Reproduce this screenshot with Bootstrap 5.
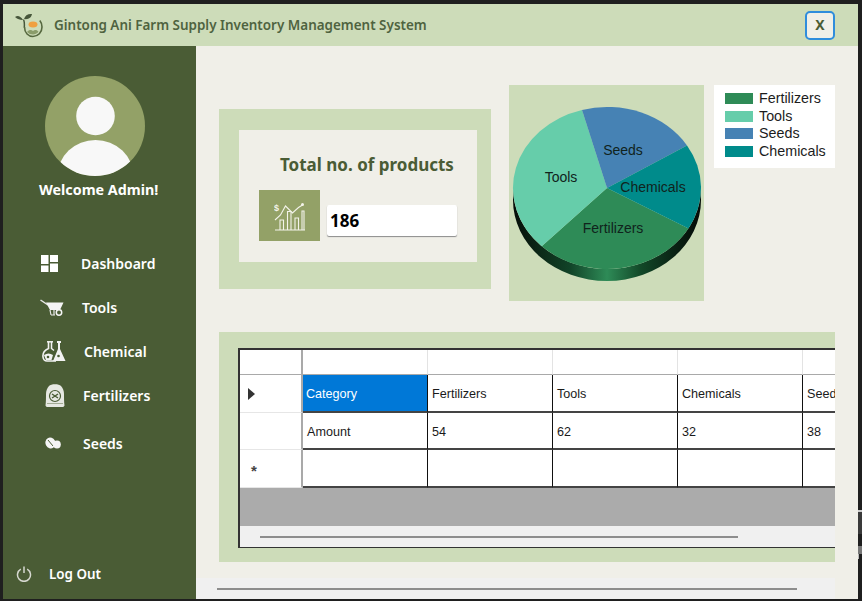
<!DOCTYPE html>
<html lang="en">
<head>
<meta charset="utf-8">
<title>Gintong Ani Farm Supply Inventory Management System</title>
<link href="https://cdn.jsdelivr.net/npm/bootstrap@5.3.0/dist/css/bootstrap.min.css" rel="stylesheet">
<style>
html,body{height:601px;overflow:hidden}
body{background:#1f1f1f;font-family:"Noto Sans","Open Sans",sans-serif}
.appwin{width:855px;height:595px;margin:4px 0 0 3px;background:#f0efe8}
.titlebar{height:42px;background:#cddcb9;padding:0 23px 0 12px}
.apptitle{font-size:13.45px;font-weight:600;color:#4f6340;margin-left:11px}
.closebtn{width:30px;height:29px;padding:0;background:#f0efe8;border:2px solid #2f8ddc;border-radius:5px;color:#4a5c35;font-weight:700;font-size:14px;line-height:1}
.closebtn:hover{background:#f0efe8;border-color:#2f8ddc;color:#4a5c35}
.bodyrow{height:553px}
.sidebar{width:193px;background:#4a5c35;color:#fff;flex:none}
.avatarwrap{padding-top:30px;padding-left:42px}
.welcome{font-size:14.3px;font-weight:700;margin:4px 0 0 36px;line-height:20px}
.menu{margin-top:41px}
.menuitem{height:44px;font-size:14px;font-weight:600;color:#fff;text-decoration:none}
.menuitem:hover{color:#fff}
.iconcell{width:78px;padding-left:38px;flex:none}
.cell-tools{width:79px;padding-left:37px}
.cell-chem{width:81px;padding-left:39px}
.cell-fert{width:80px;padding-left:42px}
.cell-seed{width:80px;padding-left:42px}
.item-seeds{height:48px;padding-top:4px}
.logoutrow{height:50px;font-size:13.4px;font-weight:600;padding-left:13px}
.logoutrow span{margin-left:17px}
.contentcol{width:639px;background:#f0efe8;overflow:hidden;flex:none}
.toparea{padding:39px 0 0 23px}
.totalpanel{width:272px;height:180px;margin-top:24px;background:#cddcb9;padding:21px 14px 27px 20px;flex:none}
.totalinner{height:132px;background:#f0efe8;padding:24px 20px 0}
.totallabel{font-size:17px;font-weight:700;color:#4a5c35;margin:0 0 14px 21px;line-height:22px;white-space:nowrap}
.iconbox{width:61px;height:51px;background:#93a167}
.countinput{width:130px;height:31px;margin:15px 0 0 7px;padding:0 3px;border:0;border-radius:2px;box-shadow:0 1px 1px #8b8b8b;font-size:17px;font-weight:700;color:#000;background:#fff}
.countinput:focus{box-shadow:0 1px 1px #8b8b8b;background:#fff}
.piepanel{width:195px;height:216px;margin-left:18px;background:#cddcb9}
.piepanel text{font-family:"Liberation Sans",sans-serif;font-size:14px;fill:#10231c}
.legendbox{width:121px;height:83px;margin-left:10px;background:#fff;padding:5px 0 0 11px;font-family:"Liberation Sans",sans-serif;font-size:14.3px;color:#1c1c1c}
.legendrow{height:17.5px;line-height:17.5px}
.swatch{width:28px;height:11px;margin-right:6px}
.sw-fert{background:#2e8b57}
.sw-tools{background:#66cdaa}
.sw-seeds{background:#4682b4}
.sw-chem{background:#008b8b}
.gridpanel{height:230px;margin:31px 0 0 23px;background:#cddcb9;padding:16px 0 14px 19px}
.gridframe{height:200px;border:2px solid #333;border-right:0;border-bottom-width:1px;background:#ababab}
.gridclip{overflow:hidden}
.datagrid{border-collapse:separate;border-spacing:0;table-layout:fixed;width:688px;font-family:"Liberation Sans",sans-serif;font-size:12.6px;color:#1a1a1a;background:#fff}
.colhead{width:63px}
.coldata{width:125px}
.datagrid td{padding:3px 3px 0 4px;vertical-align:middle;border-right:1px solid #111;border-bottom:2px solid #444;white-space:nowrap;overflow:hidden}
.datagrid tr.headrow td{height:25px;border-right:1px solid #e3e3e3;border-bottom:1px solid #a9a9a9}
.datagrid td.rowhead,.datagrid tr.headrow td.rowhead{border-right:2px solid #a9a9a9;border-bottom:1px solid #e6e6e6;padding:0}
.datagrid tr.headrow td.rowhead{border-bottom:1px solid #a9a9a9}
.datagrid td.selcell{background:#0078d7;color:#fff;padding-left:3px}
.datagrid tr.rowa td{height:38px}
.datagrid tr.rowc td{height:37px}
.datagrid tr.rowb td{height:38px}
.arrowmark{width:0;height:0;margin-left:8px;border-left:7px solid #333;border-top:6px solid transparent;border-bottom:6px solid transparent}
.starmark{font-size:15px;font-weight:700;line-height:14px;margin:5px 0 0 11px;color:#444;display:block}
.hscroll{height:21px;background:#f0f0f0;flex:none}
.thumbbar{height:2px;background:#8d8d8d}
.thumb-inner{width:478px;margin:0 0 0 20px}
.hscroll.outer{margin-top:16px}
.thumb-outer{width:580px;margin-left:21px}
.edgestrip{width:4px;padding-top:508px}
.edge-a{height:24px;background:#3a3a3a;border-top:2px solid #ccc;margin-top:2px}
.edge-b{height:8px;background:#777;margin-top:12px}
.edge-c{width:1px;height:5px;background:#bbb}
</style>
</head>
<body>
<div class="d-flex">
<div class="appwin">
  <header class="titlebar d-flex align-items-center">
    <svg width="28" height="26" viewBox="0 0 28 26" aria-hidden="true">
      <path d="M8 8C5 3.500 2.500 3.500 0 5c3 2.500 5.500 3.200 8 3z" fill="#46563a"/>
      <path d="M9 7c1-3.500 4-5.500 8-5-.5 3.500-3.500 5.800-8 5z" fill="#46563a"/>
      <path d="M8.500 7.500c1 2 1 5 .8 8" fill="none" stroke="#46563a" stroke-width="1.500"/>
      <path d="M9.500 15c0 6 4 9.500 8.500 9.500 5 0 9-4 9-9.500 0-2.500-.8-4.800-2.200-6.500" fill="none" stroke="#56683f" stroke-width="1.600"/>
      <ellipse cx="18" cy="12.500" rx="4.500" ry="3" fill="#f0a040"/>
      <path d="M12 20c2-2.500 4.500-2.500 6-1 1.500-1.500 4-1.500 5.500.8-1.500 2-3.500 2.700-5.500 2.700s-4.500-.8-6-2.500z" fill="#8a9c6a"/>
    </svg>
    <span class="apptitle">Gintong Ani Farm Supply Inventory Management System</span>
    <button type="button" class="btn closebtn ms-auto">X</button>
  </header>
  <div class="bodyrow d-flex">
    <aside class="sidebar d-flex flex-column">
      <div class="avatarwrap">
        <svg width="100" height="100" viewBox="0 0 100 100" aria-hidden="true">
          <defs><clipPath id="avclip"><circle cx="50" cy="50" r="50"/></clipPath></defs>
          <circle cx="50" cy="50" r="50" fill="#93a167"/>
          <circle cx="50.500" cy="40" r="19.300" fill="#f8f8f8"/>
          <ellipse cx="50.500" cy="100" rx="38" ry="36" fill="#f8f8f8" clip-path="url(#avclip)"/>
        </svg>
      </div>
      <div class="welcome">Welcome Admin!</div>
      <nav class="menu">
        <a href="#" class="menuitem d-flex align-items-center">
          <span class="iconcell d-flex"><svg width="17" height="17" viewBox="0 0 17 17" aria-hidden="true"><path d="M0 0h7.500v9H0zM9 0h8v7H9zM0 10.500h7.500V17H0zM9 8.500h8V17H9z" fill="#fff"/></svg></span>Dashboard
        </a>
        <a href="#" class="menuitem d-flex align-items-center">
          <span class="iconcell cell-tools d-flex"><svg width="24" height="17" viewBox="0 0 24 17" aria-hidden="true"><path d="M.5 1 8 6" stroke="#e8e8e8" stroke-width="1.500" fill="none"/><path d="M6 3.500h17.500L20 11H10z" fill="#f4f4f4"/><path d="M10 11l1 5M14 11v5M11 16h4" stroke="#e8e8e8" stroke-width="1.200" fill="none"/><circle cx="19" cy="13.500" r="2.700" fill="none" stroke="#f4f4f4" stroke-width="1.500"/></svg></span>Tools
        </a>
        <a href="#" class="menuitem d-flex align-items-center">
          <span class="iconcell cell-chem d-flex"><svg width="24" height="21" viewBox="0 0 24 21" aria-hidden="true"><path d="M5 .8h6" stroke="#f2f2f2" stroke-width="1.500"/><path d="M6.500 1v6.500C3 9 .5 12 1 16c.3 2.500 2 4 4 4h9" stroke="#f2f2f2" stroke-width="1.600" fill="none"/><path d="M9.500 1v6.500l2.500 2" stroke="#f2f2f2" stroke-width="1.500" fill="none"/><path d="M2 14c3-2 6-2 9 0l-1.500 5H4z" fill="#f2f2f2"/><path d="M15 0v2h1v6l-5 12h12.500L18 8V2h1V0z" fill="#f2f2f2"/><circle cx="6" cy="16" r="1.300" fill="#4a5c35"/><circle cx="16.500" cy="15" r="1.300" fill="#4a5c35"/></svg></span>Chemical
        </a>
        <a href="#" class="menuitem d-flex align-items-center">
          <span class="iconcell cell-fert d-flex"><svg width="20" height="24" viewBox="0 0 20 24" aria-hidden="true"><path d="M4 3C6 .5 14 .5 16 3c2 2 3 5 3 8 0 4 0 8 .5 11.500-.2.800-1 1.500-2 1.500H2.500c-1 0-1.800-.7-2-1.500C1 19 1 15 1 11c0-3 1-6 3-8z" fill="#e6e8e2"/><circle cx="10" cy="13" r="5.500" fill="none" stroke="#4a5c35" stroke-width="1.200"/><path d="M7 11l6 4M13 11l-6 4" stroke="#4a5c35" stroke-width="1.500"/><path d="M2 20.500h16" stroke="#a3ab95"/></svg></span>Fertilizers
        </a>
        <a href="#" class="menuitem item-seeds d-flex align-items-center">
          <span class="iconcell cell-seed d-flex"><svg width="16" height="13" viewBox="0 0 16 13" aria-hidden="true"><ellipse cx="5.500" cy="6" rx="5" ry="5.500" transform="rotate(-30 5.500 6)" fill="#f5f5f5"/><path d="M3 3l5 6" stroke="#4a5c35"/><ellipse cx="12" cy="7.500" rx="3.800" ry="4" fill="#f5f5f5"/></svg></span>Seeds
        </a>
      </nav>
      <a href="#" class="menuitem logoutrow mt-auto d-flex align-items-center">
        <svg width="16" height="16" viewBox="0 0 16 16" aria-hidden="true"><path d="M4.800 3.200a6.500 6.500 0 1 0 6.400 0" fill="none" stroke="#d6d8d0" stroke-width="1.500"/><path d="M8 .5v6.500" stroke="#d6d8d0" stroke-width="1.500"/></svg>
        <span>Log Out</span>
      </a>
    </aside>
    <main class="contentcol d-flex flex-column">
      <div class="toparea d-flex align-items-start">
        <section class="totalpanel">
          <div class="totalinner">
            <div class="totallabel">Total no. of products</div>
            <div class="d-flex align-items-start">
              <div class="iconbox d-flex align-items-center justify-content-center flex-shrink-0">
                <svg width="32" height="32" viewBox="0 0 32 32" aria-hidden="true">
                  <path d="M1 30h30M6 30V20h3.500v10M13.500 30V11.500h3.500V30M21 30V18h3.500v12M28 30V11h2v19" fill="none" stroke="#f3f3ea" stroke-width="1.100"/>
                  <path d="M1 20l5.500-5 5-9 7 7 6-5.500 4-2.500" fill="none" stroke="#f3f3ea" stroke-width="1.100"/>
                  <circle cx="28.500" cy="4.500" r="1.500" fill="#f3f3ea"/>
                  <text x="0" y="11" font-size="9" font-weight="700" fill="#f3f3ea" font-family="Liberation Sans, sans-serif">$</text>
                </svg>
              </div>
              <input class="form-control countinput" type="text" value="186" readonly aria-label="Total no. of products">
            </div>
          </div>
        </section>
        <section class="piepanel flex-shrink-0">
          <svg width="195" height="216" viewBox="0 0 195 216" role="img" aria-label="Pie chart">
            <defs>
              <linearGradient id="wallgrad" gradientUnits="userSpaceOnUse" x1="4" y1="0" x2="192" y2="0">
                <stop offset="0" stop-color="#050d08"/>
                <stop offset=".15" stop-color="#0c2a18"/>
                <stop offset=".3" stop-color="#114227"/>
                <stop offset=".5" stop-color="#2e8b57"/>
                <stop offset=".68" stop-color="#124828"/>
                <stop offset=".85" stop-color="#0a2415"/>
                <stop offset="1" stop-color="#040b07"/>
              </linearGradient>
            </defs>
            <path d="M4 103A94 81 0 0 0 192 103V115A94 81 0 0 1 4 115Z" fill="url(#wallgrad)"/>
            <path d="M98 103L32.700 161.250A94 81 0 0 0 179.500 143.400Z" fill="#2e8b57"/>
            <path d="M98 103L73 24.900A94 81 0 0 0 32.700 161.250Z" fill="#66cdaa"/>
            <path d="M98 103L178 60.500A94 81 0 0 0 73 24.900Z" fill="#4682b4"/>
            <path d="M98 103L179.500 143.400A94 81 0 0 0 178 60.500Z" fill="#008b8b"/>
            <text x="114" y="70" text-anchor="middle">Seeds</text>
            <text x="52" y="97" text-anchor="middle">Tools</text>
            <text x="144" y="107" text-anchor="middle">Chemicals</text>
            <text x="104" y="148" text-anchor="middle">Fertilizers</text>
          </svg>
        </section>
        <aside class="legendbox flex-shrink-0">
          <div class="legendrow d-flex align-items-center"><span class="swatch sw-fert"></span>Fertilizers</div>
          <div class="legendrow d-flex align-items-center"><span class="swatch sw-tools"></span>Tools</div>
          <div class="legendrow d-flex align-items-center"><span class="swatch sw-seeds"></span>Seeds</div>
          <div class="legendrow d-flex align-items-center"><span class="swatch sw-chem"></span>Chemicals</div>
        </aside>
      </div>
      <section class="gridpanel">
        <div class="gridframe d-flex flex-column">
          <div class="gridclip flex-grow-1">
            <table class="datagrid">
              <colgroup><col class="colhead"><col class="coldata"><col class="coldata"><col class="coldata"><col class="coldata"><col class="coldata"></colgroup>
              <tbody>
                <tr class="headrow"><td class="rowhead"></td><td></td><td></td><td></td><td></td><td></td></tr>
                <tr class="rowa"><td class="rowhead"><div class="arrowmark"></div></td><td class="selcell">Category</td><td>Fertilizers</td><td>Tools</td><td>Chemicals</td><td>Seeds</td></tr>
                <tr class="rowc"><td class="rowhead"></td><td>Amount</td><td>54</td><td>62</td><td>32</td><td>38</td></tr>
                <tr class="rowb"><td class="rowhead"><span class="starmark">*</span></td><td></td><td></td><td></td><td></td><td></td></tr>
              </tbody>
            </table>
          </div>
          <div class="hscroll d-flex align-items-center"><div class="thumbbar thumb-inner"></div></div>
        </div>
      </section>
      <div class="hscroll outer d-flex align-items-center"><div class="thumbbar thumb-outer"></div></div>
    </main>
  </div>
</div>
<div class="edgestrip flex-shrink-0">
  <div class="edge-a"></div>
  <div class="edge-b"></div>
  <div class="edge-c"></div>
</div>
</div>
</body>
</html>
